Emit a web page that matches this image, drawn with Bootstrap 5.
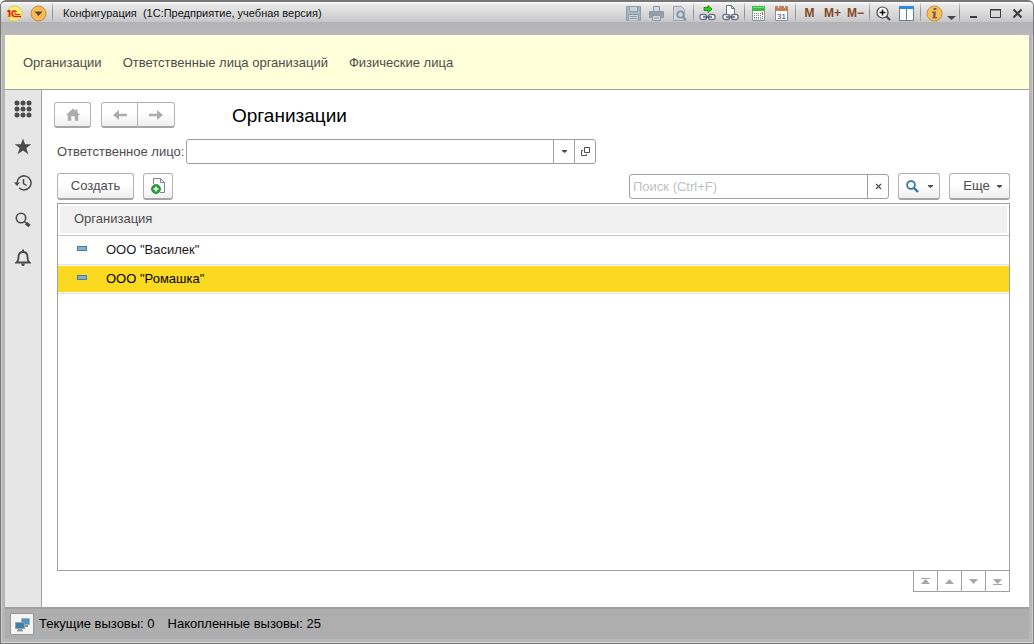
<!DOCTYPE html>
<html lang="ru">
<head>
<meta charset="utf-8">
<meta name="viewport" content="width=device-width, initial-scale=1">
<title>Конфигурация (1С:Предприятие, учебная версия)</title>
<link href="https://cdn.jsdelivr.net/npm/bootstrap@5.3.0/dist/css/bootstrap.min.css" rel="stylesheet">
<style>
  body { font: 13px/16px "Liberation Sans", Arial, sans-serif; color: #4d4d4d; background: #fff; }
  button { font: inherit; color: inherit; }
  svg { display: block; flex: none; }
  .app-window { border: 1px solid #777; border-top-width: 2px; border-radius: 6px 6px 0 0; padding: 0 4px 4px; background: #b7b6b8; box-shadow: inset 1px 0 #cfcfcf, inset -1px 0 #cfcfcf, inset 0 -1px #d8d8d8; }
  .title-bar { height: 33px; margin: 0 -4px; padding: 0 5px 11px 5px; border-radius: 4px 4px 0 0; background: linear-gradient(#fff 0, #e8e8e8 3px, #d2d2d4 15px, #c6c6c8 20px, #b3b3b6 20px, #b9b9bb 33px); }
  .title-text { font-size: 11px; color: #111; white-space: pre; }
  .tool { width: 23px; height: 22px; padding: 0; border: 0; background: none; display: flex; align-items: center; justify-content: center; flex: none; }
  .tool-narrow { width: 11px; }
  .tool-win { width: 22px; }
  .tool-memory { font-size: 12px; font-weight: 700; color: #84491f; }
  .divider { width: 1px; height: 20px; margin: 0 2px; background: linear-gradient(#d0d0d0, #8f8f8f 40%, #8f8f8f 60%, #c0c0c0); flex: none; }
  .sections { height: 55px; padding: 2px 18px 0; gap: 21px; background: #ffffd9; border-bottom: 1px solid #a0a0a0; }
  .sections a { color: #4d4d4d; text-decoration: none; }
  .side { width: 37px; padding-top: 8px; gap: 15px; background: #e6e6e6; border-right: 1px solid #a0a0a0; }
  .side button { width: 36px; height: 22px; padding: 0; border: 0; background: none; display: flex; align-items: center; justify-content: center; }
  .work { padding: 12px 19px 15px 15px; background: #fff; }
  .btn-flat { padding: 0; color: #4d4d4d; border: 1px solid #b3b3b3; border-bottom: 2px solid #a6a6a6; border-radius: 3px; background: linear-gradient(#fff 45%, #efefef); display: flex; align-items: center; justify-content: center; height: 27px; font-size: 13px; line-height: 16px; }
  .nav-row { margin-left: -3px; gap: 10px; }
  .nav-row .btn-flat { width: 37px; height: 26px; flex: none; }
  .nav-row .btn-group .btn-flat:last-child { width: 38px; }
  .page-title { margin: 2px 0 0 47px; font-size: 19px; line-height: 24px; font-weight: 400; color: #000; }
  .person-row { margin-top: 11px; gap: 2px; }
  .command-row { margin-top: 9px; gap: 9px; }
  .create-btn { width: 77px; }
  .copy-btn { width: 30px; }
  .find-btn { width: 42px; gap: 9px; }
  .more-btn { width: 61px; gap: 7px; padding-left: 6px; }
  .field { height: 25px; border: 1px solid #a0a0a0; border-radius: 3px; background: #fff; }
  .field input { border: 0; outline: 0; padding: 0 3px; min-width: 0; background: none; color: #333; }
  .field input::placeholder { color: #bfbfbf; opacity: 1; }
  .field button { width: 21px; padding: 0; border: 0; border-left: 1px solid #a0a0a0; background: none; display: flex; align-items: center; justify-content: center; flex: none; }
  .person-field { width: 410px; }
  .search-field { width: 260px; }
  .list-box { margin-top: 3px; border: 1px solid #a0a0a0; min-height: 200px; }
  .org-table { width: 100%; font-size: 13px; }
  .org-table th { height: 31px; padding: 0 16px; font-weight: 400; background: #f1f1f1; border-bottom: 1px solid #c8c8c8; box-shadow: inset 0 0 0 2px #fff; }
  .org-table td { height: 29px; padding: 0; border-bottom: 1px solid #e0e0e0; color: #1a1a1a; }
  .org-table .picked td { background: #fbd921; color: #000; box-shadow: inset 0 1px #fff, inset 0 -1px #fff; }
  .row-mark { width: 10px; height: 5px; margin: -3px 19px 0; border: 1px solid #4b7d9a; background: #7db1d0; }
  .pager { margin-top: -1px; }
  .pager button { width: 25px; height: 22px; margin-left: -1px; padding: 0; border: 1px solid #a0a0a0; background: #fff; display: flex; align-items: center; justify-content: center; }
  .status { height: 32px; padding: 0 5px; gap: 5px; color: #000; background: #aeaeae; border-top: 2px solid #a0a0a0; }
  .status button { width: 24px; height: 22px; padding: 0; border: 1px solid #999; border-radius: 2px; background: #f4f4f4; display: flex; align-items: center; justify-content: center; }
</style>
<script src="https://cdn.jsdelivr.net/npm/bootstrap@5.3.0/dist/js/bootstrap.bundle.min.js"></script>
</head>
<body>
<div class="app-window d-flex flex-column min-vh-100">

  <header class="title-bar d-flex align-items-center">
    <svg width="17" height="17" viewBox="0 0 17 17" role="img" aria-label="1С"><circle cx="8.500" cy="8.500" r="7.500" fill="#fff07a" stroke="#ecc544"/><path d="M1.500 6h2v6" fill="none" stroke="#d9201a" stroke-width="2"/><path d="M10.500 7C9.800 5.400 6 5.300 6 8.500c0 2.200 1.500 3 3 3h6" fill="none" stroke="#d9201a" stroke-width="1.500"/><path d="M9.800 8.200c-1.400-.5-1.700 1.100-.5 1.300H14" fill="none" stroke="#d9201a"/></svg>
    <button class="tool ms-1" aria-label="Главное меню"><svg width="17" height="17" viewBox="0 0 17 17"><circle cx="8.500" cy="8.500" r="7.500" fill="#f9b955" stroke="#c48a3b"/><path d="M4.500 6.500h8l-4 4.500z" fill="#5d4634"/></svg></button>
    <span class="divider"></span>
    <span class="title-text ms-2">Конфигурация  (1С:Предприятие, учебная версия)</span>

    <div class="d-flex align-items-center ms-auto">
      <button class="tool" aria-label="Сохранить"><svg width="15" height="15" viewBox="0 0 15 15" fill="none" stroke="#8e9dab"><path d="M.5.5h14v14H.5z" fill="#a9b6c2"/><path d="M3.500.5v5h8v-5z" fill="#ccd3d9"/><path d="M2.500 14.500v-6h10v6" fill="#ccd3d9"/><path d="M4 10.500h7M4 12.500h7"/></svg></button>
      <button class="tool" aria-label="Печать"><svg width="15" height="15" viewBox="0 0 15 15" fill="#b2bac2" stroke="#8e99a4"><path d="M4.500 5V.5h6V5" fill="#d5d8dc"/><path d="M.5 5.500h14v6H.5z" fill="#93a0ac"/><path d="M3.500 9.500h8v5h-8z" fill="#d5d8dc"/><path d="M5 12h5"/></svg></button>
      <button class="tool" aria-label="Предварительный просмотр"><svg width="15" height="15" viewBox="0 0 15 15" fill="none" stroke="#9aa5b0"><path d="M1.500.5h8l3 3v11h-11z" fill="#d2d6da"/><circle cx="8.500" cy="8.500" r="3.200" stroke="#8495a5" stroke-width="1.800"/><path d="m11 11 3 3.500" stroke="#8495a5" stroke-width="2.200"/></svg></button>
      <span class="divider"></span>
      <button class="tool" aria-label="Открыть ссылку"><svg width="17" height="16" viewBox="0 0 17 16" fill="none"><path d="M5 2.500h4V.5l4 3.500-4 3.500v-2H5z" fill="#24d51c" stroke="#14750f" stroke-width=".8"/><rect x="1" y="9.500" width="6.500" height="5" rx="2" fill="#fff" stroke="#657385" stroke-width="1.300"/><rect x="9.500" y="9.500" width="6.500" height="5" rx="2" fill="#fff" stroke="#657385" stroke-width="1.300"/><path d="M4 12h9" stroke="#526174" stroke-width="1.500"/></svg></button>
      <button class="tool" aria-label="Получить ссылку"><svg width="17" height="16" viewBox="0 0 17 16" fill="none"><path d="M4.500 9V.5h5l3 3V9" fill="#fff" stroke="#657385"/><path d="M9.500.5v3h3" stroke="#657385"/><rect x="1" y="9.500" width="6.500" height="5" rx="2" fill="#fff" stroke="#657385" stroke-width="1.300"/><rect x="9.500" y="9.500" width="6.500" height="5" rx="2" fill="#fff" stroke="#657385" stroke-width="1.300"/><path d="M4 12h9" stroke="#526174" stroke-width="1.500"/></svg></button>
      <span class="divider"></span>
      <button class="tool" aria-label="Калькулятор"><svg width="13" height="15" viewBox="0 0 13 15"><path d="M.5.5h12v14H.5z" fill="#f7f8f8" stroke="#8b9699"/><path d="M0 0h13v5H0z" fill="#3fbd46"/><path d="M1 1h11v1H1z" fill="#79dc7d"/><path d="M2 7.500h7M2 9.500h7M2 11.500h7M2 13h7" stroke="#758185" stroke-dasharray="1 1"/><path d="M10.500 6v3" stroke="#d8473a"/><path d="M10.500 10v4" stroke="#758185" stroke-dasharray="1 1"/></svg></button>
      <button class="tool" aria-label="Календарь"><svg width="13" height="15" viewBox="0 0 13 15"><path d="M.5.5h12v14H.5z" fill="#fff" stroke="#8a8f99"/><path d="M0 1h13v4H0z" fill="#c9804c"/><path d="M3.500 0v2M9.500 0v2" stroke="#eee"/><text x="6.500" y="12.500" font-size="8" text-anchor="middle" fill="#2c3e5c" font-family="Liberation Sans">31</text></svg></button>
      <span class="divider"></span>
      <button class="tool tool-memory">M</button>
      <button class="tool tool-memory">M+</button>
      <button class="tool tool-memory">M−</button>
      <span class="divider"></span>
      <button class="tool" aria-label="Масштаб"><svg width="15" height="15" viewBox="0 0 15 15" fill="none" stroke="#3b4248"><circle cx="6.500" cy="6.500" r="5.500" fill="#fff" stroke-width="1.200"/><path d="M3.500 6.500h6M6.500 3.500v6" stroke="#111" stroke-width="1.600"/><path d="m10.500 10.500 3.500 3.500" stroke-width="2"/></svg></button>
      <button class="tool" aria-label="Панели"><svg width="15" height="15" viewBox="0 0 15 15"><path d="M.5.5h14v14H.5z" fill="#fff" stroke="#5f7f9d"/><path d="M0 0h15v3H0z" fill="#2f8be0"/><path d="M7.500 3v11" stroke="#5f7f9d"/></svg></button>
      <span class="divider"></span>
      <button class="tool" aria-label="О программе"><svg width="17" height="17" viewBox="0 0 17 17"><circle cx="8.500" cy="8.500" r="7.500" fill="#f8bf59" stroke="#c48f3f"/><path d="M7.500 3h3v2h-3zM6 6.500h4L9.500 12h1.500v1.500H6.500V12H7l.3-4H6z" fill="#776655"/></svg></button>
      <button class="tool tool-narrow" aria-label="Ещё команды"><svg class="mt-2" width="9" height="5" viewBox="0 0 9 5"><path d="M0 1h9L4.500 5z" fill="#444"/></svg></button>
      <span class="divider"></span>
      <button class="tool tool-win" aria-label="Свернуть"><svg width="11" height="11" viewBox="0 0 11 11"><path d="M2 8h7v2H2z" fill="#3c3c3c"/></svg></button>
      <button class="tool tool-win" aria-label="Развернуть"><svg width="11" height="11" viewBox="0 0 11 11"><path d="M.5 1.500h10v8H.5z" fill="none" stroke="#3c3c3c"/><path d="M0 1h11v1.500H0z" fill="#3c3c3c"/></svg></button>
      <button class="tool tool-win" aria-label="Закрыть"><svg width="11" height="11" viewBox="0 0 11 11"><path d="m1.500 1.500 8 8m0-8-8 8" stroke="#3c3c3c" stroke-width="2"/></svg></button>
    </div>
  </header>

  <nav class="sections d-flex align-items-center">
    <a href="#">Организации</a>
    <a href="#">Ответственные лица организаций</a>
    <a href="#">Физические лица</a>
  </nav>

  <div class="d-flex flex-grow-1">
    <aside class="side d-flex flex-column flex-shrink-0">
      <button aria-label="Меню функций"><svg width="18" height="18" viewBox="0 0 18 18" fill="#4b4b4b"><circle cx="3" cy="3" r="2.500"/><circle cx="9" cy="3" r="2.500"/><circle cx="15" cy="3" r="2.500"/><circle cx="3" cy="9" r="2.500"/><circle cx="9" cy="9" r="2.500"/><circle cx="15" cy="9" r="2.500"/><circle cx="3" cy="15" r="2.500"/><circle cx="9" cy="15" r="2.500"/><circle cx="15" cy="15" r="2.500"/></svg></button>
      <button aria-label="Избранное"><svg width="18" height="17" viewBox="0 0 18 17"><path d="m9 .5 2.100 5.800h6.200l-5 3.700 2 6.200L9 12.500l-5.300 3.700 2-6.200-5-3.700h6.200z" fill="#4b4b4b"/></svg></button>
      <button aria-label="История"><svg width="18" height="16" viewBox="0 0 18 16"><path d="M3 8a7 7 0 1 1 2 4.800" fill="none" stroke="#4b4b4b" stroke-width="1.500"/><path d="M0 7.500h6L3 11z" fill="#4b4b4b"/><path d="M9.500 4v4.500l3 2" fill="none" stroke="#4b4b4b" stroke-width="1.500"/></svg></button>
      <button aria-label="Поиск"><svg width="16" height="16" viewBox="0 0 16 16" fill="none" stroke="#4b4b4b"><circle cx="6" cy="6" r="4.700" stroke-width="1.600"/><path d="m9.500 9.500 1.500 1.500" stroke-width="1.500"/><path d="m11 11 3.500 3" stroke-width="3.500"/></svg></button>
      <button aria-label="Оповещения"><svg width="16" height="17" viewBox="0 0 16 17"><path d="M1.500 13.500c2-1.500 2-3.500 2-5.500 0-3 1.500-5 4.500-5s4.500 2 4.500 5c0 2 0 4 2 5.500z" fill="none" stroke="#4b4b4b" stroke-width="1.800"/><path d="M7 .5h2V3H7zM6 14.500h4L9 17H7z" fill="#4b4b4b"/></svg></button>
    </aside>

    <main class="work d-flex flex-column flex-grow-1">
      <div class="nav-row d-flex align-items-center">
        <button class="btn btn-flat" aria-label="Начальная страница"><svg width="14" height="13" viewBox="0 0 16 14"><path d="M8 0 0 7.500h2V14h4V9h4v5h4V7.500h2L13 4.500V1h-2v2z" fill="#acacac"/></svg></button>
        <div class="btn-group">
          <button class="btn btn-flat" aria-label="Назад"><svg width="14" height="10" viewBox="0 0 14 10"><path d="M0 5 6 0v3.700h8v2.600H6V10z" fill="#acacac"/></svg></button>
          <button class="btn btn-flat" aria-label="Вперёд"><svg width="14" height="10" viewBox="0 0 14 10"><path d="M14 5 8 0v3.700H0v2.600h8V10z" fill="#acacac"/></svg></button>
        </div>
        <h1 class="page-title">Организации</h1>
      </div>

      <div class="person-row d-flex align-items-center">
        <label for="person">Ответственное лицо:</label>
        <div class="field person-field d-flex">
          <input id="person" type="text" class="flex-grow-1">
          <button aria-label="Выбрать"><svg width="5" height="3" viewBox="0 0 5 3"><path d="M0 0h5v1L2.500 3 0 1z" fill="#4d4d4d"/></svg></button>
          <button aria-label="Открыть"><svg width="9" height="9" viewBox="0 0 9 9" fill="none" stroke="#4d4d4d"><path d="M3.500.5h5v5h-5zM2 3.500H.5v5h5V7"/></svg></button>
        </div>
      </div>

      <div class="command-row d-flex align-items-center">
        <button class="btn btn-flat create-btn">Создать</button>
        <button class="btn btn-flat copy-btn" aria-label="Создать копированием"><svg width="14" height="16" viewBox="0 0 14 16" fill="none"><path d="M2.500 6V.5h7l4 4v10H9" fill="#fff" stroke="#77869a"/><path d="M9.500.5v4h4" stroke="#77869a"/><circle cx="5" cy="11" r="4.500" fill="#2f9e3c" stroke="#1f7f2c" stroke-width=".8"/><path d="M2.500 11h5M5 8.500v5" stroke="#fff" stroke-width="1.500"/></svg></button>
        <div class="field search-field d-flex ms-auto">
          <input type="search" class="flex-grow-1" placeholder="Поиск (Ctrl+F)" aria-label="Поиск">
          <button aria-label="Очистить"><svg width="7" height="7" viewBox="0 0 7 7"><path d="m1 1 5 5m0-5L1 6" stroke="#4d4d4d" stroke-width="1.200"/></svg></button>
        </div>
        <button class="btn btn-flat find-btn" aria-label="Найти"><svg width="13" height="13" viewBox="0 0 13 13" fill="none" stroke="#2f76ad"><circle cx="5" cy="5" r="3.900" stroke-width="1.800"/><path d="m8 8 4 4" stroke-width="2.400"/></svg><svg width="5" height="3" viewBox="0 0 5 3"><path d="M0 0h5v1L2.500 3 0 1z" fill="#4d4d4d"/></svg></button>
        <button class="btn btn-flat more-btn">Еще<svg width="5" height="3" viewBox="0 0 5 3"><path d="M0 0h5v1L2.500 3 0 1z" fill="#4d4d4d"/></svg></button>
      </div>

      <div class="list-box flex-grow-1">
        <table class="org-table">
          <thead><tr><th scope="col">Организация</th></tr></thead>
          <tbody>
            <tr><td><div class="d-flex align-items-center"><span class="row-mark"></span>ООО "Василек"</div></td></tr>
            <tr class="picked"><td><div class="d-flex align-items-center"><span class="row-mark"></span>ООО "Ромашка"</div></td></tr>
          </tbody>
        </table>
      </div>
      <div class="pager d-flex justify-content-end">
        <button aria-label="В начало"><svg width="9" height="7" viewBox="0 0 9 7" fill="#a6a6a6"><path d="M0 0h9v1H0zM4.500 1 9 6H0z"/></svg></button>
        <button aria-label="Вверх"><svg width="9" height="5" viewBox="0 0 9 5" fill="#a6a6a6"><path d="M4.500 0 9 5H0z"/></svg></button>
        <button aria-label="Вниз"><svg width="9" height="5" viewBox="0 0 9 5" fill="#a6a6a6"><path d="M4.500 5 9 0H0z"/></svg></button>
        <button aria-label="В конец"><svg width="9" height="7" viewBox="0 0 9 7" fill="#a6a6a6"><path d="M0 6h9v1H0zM4.500 6 9 1H0z"/></svg></button>
      </div>
    </main>
  </div>

  <footer class="status d-flex align-items-center">
    <button aria-label="Вызовы сервера"><svg width="15" height="15" viewBox="0 0 15 15"><path d="M6.500 1.500h8v6h-8z" fill="#4f93c2" stroke="#9fb0bd"/><path d="M10 8h3v2h-3z" fill="#8c98a2"/><path d="M.5 5.500h9v6h-9z" fill="#3f7fae" stroke="#8fa3b2"/><path d="M3 12h4v1h1v1.500H2V13h1z" fill="#8c98a2"/></svg></button>
    <span>Текущие вызовы: 0</span>
    <span class="ms-2">Накопленные вызовы: 25</span>
  </footer>
</div>
</body>
</html>
